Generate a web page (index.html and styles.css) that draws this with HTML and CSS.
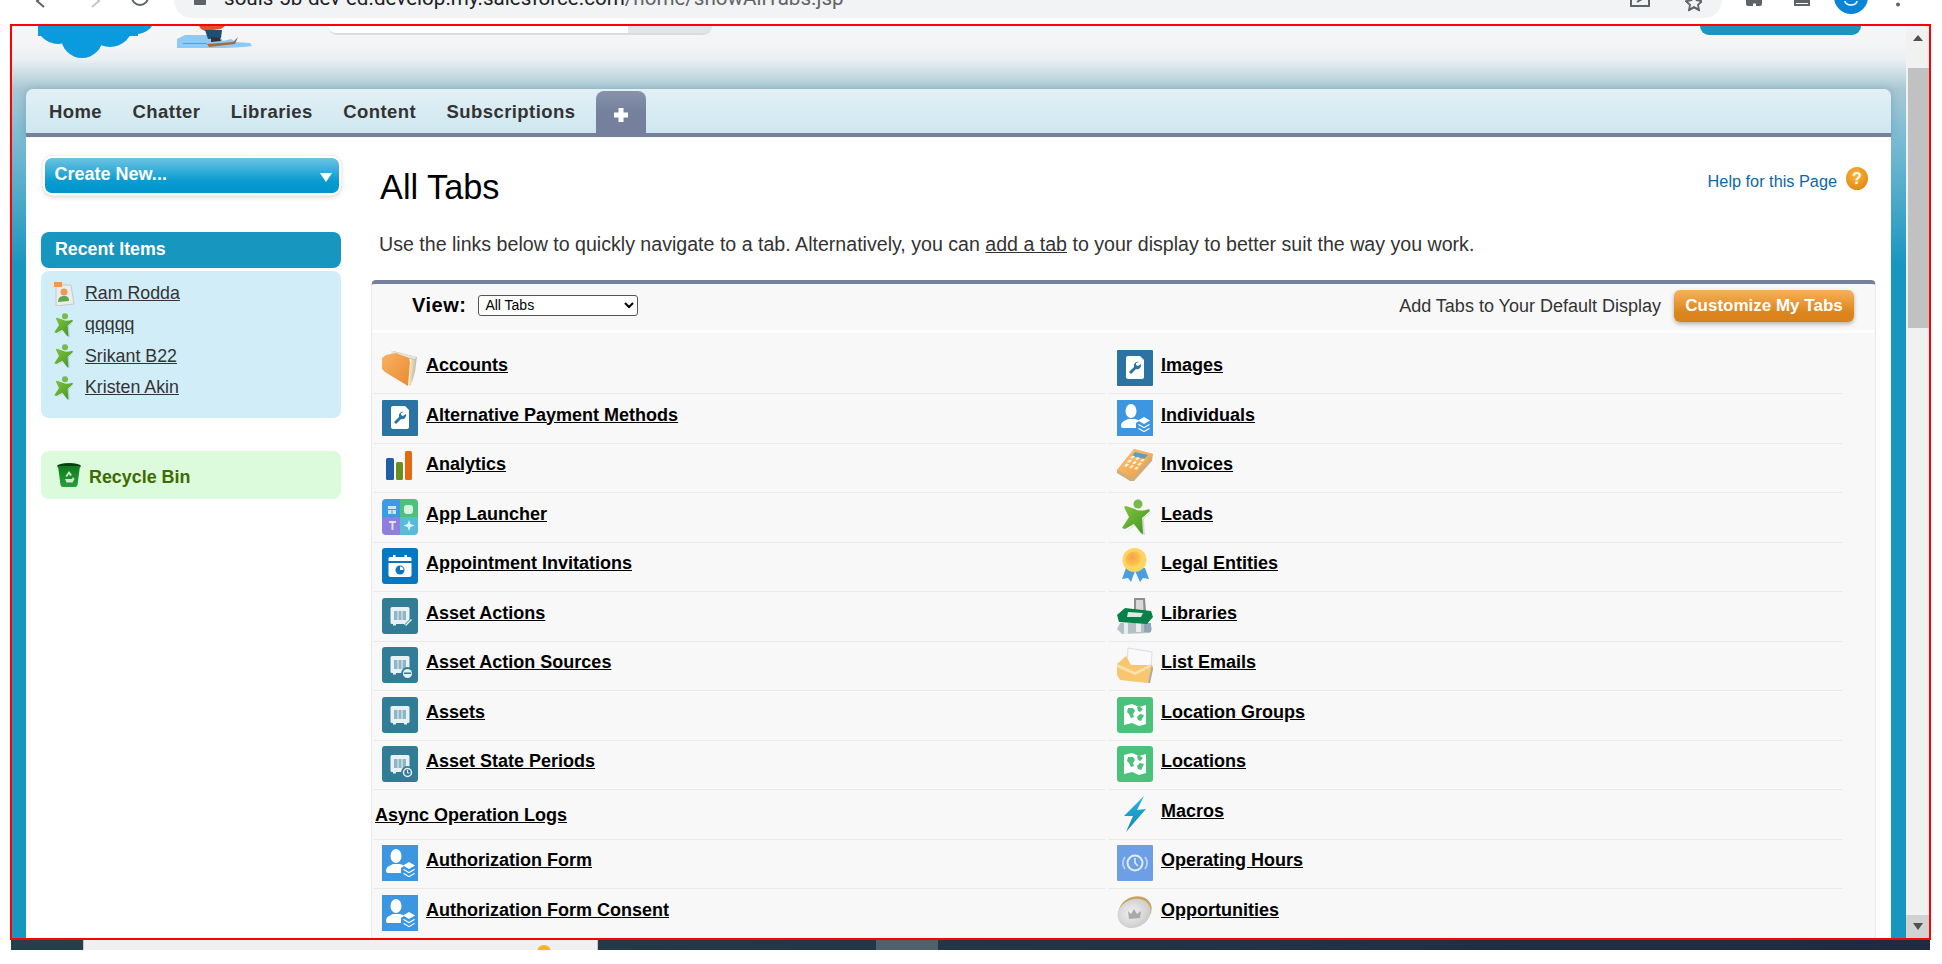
FILE: index.html
```html
<!DOCTYPE html>
<html lang="en">
<head>
<meta charset="utf-8">
<title>All Tabs</title>
<link rel="stylesheet" href="styles.css">
</head>
<body>
<svg class="defs" aria-hidden="true">
  <defs>
    <linearGradient id="gFolder" x1="0" y1="0" x2="1" y2="1"><stop offset="0" stop-color="#f9b262"/><stop offset="1" stop-color="#e98a33"/></linearGradient>
    <linearGradient id="gLead" x1="0" y1="0" x2="1" y2="1"><stop offset="0" stop-color="#83c63f"/><stop offset="1" stop-color="#3e9023"/></linearGradient>
    <linearGradient id="gCalc" x1="0" y1="0" x2="1" y2="1"><stop offset="0" stop-color="#fbc578"/><stop offset="1" stop-color="#ee9b3e"/></linearGradient>
    <linearGradient id="gBolt" x1="0" y1="0" x2="0" y2="1"><stop offset="0" stop-color="#25b6e6"/><stop offset="1" stop-color="#1189ab"/></linearGradient>
    <linearGradient id="gBin" x1="0" y1="0" x2="0" y2="1"><stop offset="0" stop-color="#0f7a1e"/><stop offset="1" stop-color="#27a13a"/></linearGradient>
    <radialGradient id="gMedal" cx=".4" cy=".35" r=".7"><stop offset="0" stop-color="#f9a04a"/><stop offset=".6" stop-color="#fbc14a"/><stop offset="1" stop-color="#fde07a"/></radialGradient>
    <radialGradient id="gCoin" cx=".45" cy=".45" r=".6"><stop offset="0" stop-color="#f2f2f2"/><stop offset="1" stop-color="#c9c9c9"/></radialGradient>
    <symbol id="i-folder" viewBox="0 0 36 36">
      <path d="M11 1 35 7 33 22 30 32 28 30 31 10 11 4Z" fill="#c9c4bb"/>
      <path d="M9 1 34 7 33 9 9 4Z" fill="#ece6da"/>
      <path d="M29 10 32 10 29 35 27 36Z" fill="#e8d9a8"/>
      <path d="M0 8 4 5 14 3 27 8 28 12 26 36 3 22 0 19Z" fill="url(#gFolder)"/>
    </symbol>
    <symbol id="i-wrench" viewBox="0 0 36 36">
      <rect width="36" height="36" rx="1" fill="#2a73a3"/>
      <path d="M9 8a2 2 0 0 1 2-2h12l4 4v17a2 2 0 0 1-2 2H11a2 2 0 0 1-2-2Z" fill="#fff"/>
      <path d="M22 12a4 4 0 0 0-5 5l-5 5 2 2 5-5a4 4 0 0 0 5-5l-3 2-2-1v-2Z" fill="#2a73a3"/>
    </symbol>
    <symbol id="i-bars" viewBox="0 0 36 36">
      <rect x="4" y="9" width="8" height="22" rx="1.5" fill="#1e5fa8"/>
      <rect x="14" y="13" width="7" height="18" rx="1.5" fill="#6a8e1f"/>
      <rect x="23" y="2" width="7" height="29" rx="1.5" fill="#e46a12"/>
    </symbol>
    <symbol id="i-launcher" viewBox="0 0 36 36">
      <path d="M18 0H4a4 4 0 0 0-4 4v14h18Z" fill="#3d9be6"/>
      <path d="M18 0h14a4 4 0 0 1 4 4v14H18Z" fill="#4bc27b"/>
      <path d="M18 36H4a4 4 0 0 1-4-4V18h18Z" fill="#8f7fdc"/>
      <path d="M18 36h14a4 4 0 0 0 4-4V18H18Z" fill="#56bcd8"/>
      <path d="M6 7h8v8H6Z" fill="#cfe6fa"/><path d="M6 10h8v1H6ZM9.500 11h1v4h-1Z" fill="#3d9be6"/>
      <rect x="22" y="6" width="9" height="9" rx="3" fill="#d8f3e3"/>
      <path d="M7 22h7v2h-2.500v7h-2v-7H7Z" fill="#e3defa"/>
      <path d="M27 21l1.500 4 4 1.500-4 1.500-1.500 4-1.500-4-4-1.500 4-1.500Z" fill="#dbf3f9"/>
    </symbol>
    <symbol id="i-appt" viewBox="0 0 36 36">
      <rect width="36" height="36" rx="3" fill="#0678bf"/>
      <path d="M8 9h20a1.500 1.500 0 0 1 1.500 1.500V13h-23v-2.500A1.500 1.500 0 0 1 8 9Z" fill="#fff"/>
      <rect x="11" y="7" width="2.500" height="4" fill="#fff"/><rect x="22.500" y="7" width="2.500" height="4" fill="#fff"/>
      <path d="M6.500 15h23v12a2 2 0 0 1-2 2h-19a2 2 0 0 1-2-2Z" fill="#fff"/>
      <circle cx="18" cy="22" r="4.500" fill="#0678bf"/><path d="M18 18.500v3.500h3.500a3.500 3.500 0 0 0-3.500-3.500Z" fill="#fff"/>
    </symbol>
    <symbol id="i-safe" viewBox="0 0 36 36">
      <rect width="36" height="36" rx="3" fill="#327c96"/>
      <path d="M10 9h16a1.500 1.500 0 0 1 1.500 1.500v14A1.500 1.500 0 0 1 26 26h-1v1.500h-3V26h-8v1.500h-3V26h-1a1.500 1.500 0 0 1-1.500-1.500v-14A1.500 1.500 0 0 1 10 9Z" fill="#e8f1f4"/>
      <rect x="12" y="13" width="12" height="9" fill="#8fb6c5"/><path d="M15.500 13h1v9h-1ZM19.500 13h1v9h-1Z" fill="#e8f1f4"/>
    </symbol>
    <symbol id="i-asset-action" viewBox="0 0 36 36">
      <use href="#i-safe"/>
      <path d="M21 28l9-9 2.500 2.500-9 9-3 .500Z" fill="#327c96"/><path d="M23 27l6-6 1 1-6 6Z" fill="#e8f1f4"/>
    </symbol>
    <symbol id="i-asset-source" viewBox="0 0 36 36">
      <use href="#i-safe"/>
      <circle cx="25.500" cy="26.500" r="6.500" fill="#327c96"/><circle cx="25.500" cy="26.500" r="4.500" fill="#e8f1f4"/><rect x="22" y="25.500" width="7" height="1.500" fill="#327c96"/>
    </symbol>
    <symbol id="i-asset-state" viewBox="0 0 36 36">
      <use href="#i-safe"/>
      <circle cx="25.500" cy="26.500" r="6.500" fill="#327c96"/><circle cx="25.500" cy="26.500" r="4" fill="none" stroke="#e8f1f4" stroke-width="1.500"/><path d="M25.500 24v3h2" fill="none" stroke="#e8f1f4"/>
    </symbol>
    <symbol id="i-auth" viewBox="0 0 36 36">
      <rect width="36" height="36" fill="#3d96e0"/>
      <ellipse cx="14" cy="11" rx="5.500" ry="7" fill="#fff"/>
      <path d="M4 26c0-4 3-5 7-7h7c2 .500 3 1 4 2l-3 2v5H6a2 2 0 0 1-2-2Z" fill="#fff"/>
      <path d="M27 17l6 3.500-6 3.500-6-3.500Z" fill="#fff"/>
      <path d="M22 24l5 3 5-3 1 .700-6 3.500-6-3.500Z" fill="#fff"/>
      <path d="M22 28l5 3 5-3 1 .700-6 3.500-6-3.500Z" fill="#fff"/>
    </symbol>
    <symbol id="i-calc" viewBox="0 0 36 36">
      <path d="M0 21 17 0 36 5 35 12 17 32 13 32 0 24Z" fill="#cfae7a"/>
      <path d="M0 21 17 0 36 5 16 29Z" fill="url(#gCalc)"/>
      <path d="M18 3 31 6 27 10 15 7Z" fill="#5b9fc6"/>
      <g fill="#fff2dc"><path d="M13 9l2.500-2.500 2.500 .8-2.500 2.500ZM18 10.500l2.500-2.500 2.500 .8-2.500 2.500ZM23 12l2.500-2.500 2.500 .8-2.500 2.500ZM10 13l2.500-2.500 2.500 .8-2.500 2.500ZM15 14.500l2.500-2.500 2.500 .8-2.500 2.500ZM20 16l2.500-2.500 2.500 .8-2.500 2.500ZM7 17l2.500-2.500 2.500 .8-2.500 2.500ZM12 18.500l2.500-2.500 2.500 .8-2.500 2.500ZM17 20l2.500-2.500 2.500 .8-2.500 2.500Z"/></g>
    </symbol>
    <symbol id="i-lead" viewBox="0 0 36 36">
      <path d="M8 33 18 27 25 36 28 36 27 20 34 13Z" fill="#000" opacity=".12"/>
      <circle cx="21" cy="5" r="4.500" fill="#79b84a"/>
      <path d="M18 10c3 2 8 2 14 0l1 2-8 7 1 16-2-1-7-9-9 5-3-1 7-11L7 8l2-1Z" fill="url(#gLead)"/>
    </symbol>
    <symbol id="i-ribbon" viewBox="0 0 36 36">
      <path d="M9 20 5 31l6-1 3 4 4-11 5 11 3-4 6 1-4-11Z" fill="#4b9fe0"/>
      <circle cx="17.500" cy="12" r="12" fill="#fbd560"/>
      <circle cx="17" cy="12" r="8.500" fill="url(#gMedal)"/>
    </symbol>
    <symbol id="i-library" viewBox="0 0 36 36">
      <path d="M17 0h11l1 13H17Z" fill="#8d8f92"/><path d="M19 2h7l.500 10H19Z" fill="#d8d8d8"/>
      <path d="M3 25h30l2 6-2 4-28 1-5-5Z" fill="#b4bfc6"/><path d="M7 25h4v11H7ZM19 25h5v9h-5Z" fill="#e8ecee"/><path d="M27 25h7v9h-7Z" fill="#8fa6b4"/>
      <path d="M8 10 34 13 36 19 30 26 2 24 0 17Z" fill="#07804a"/>
      <path d="M11 14l15 1-2 4H10Z" fill="#d6efe0"/>
    </symbol>
    <symbol id="i-mail" viewBox="0 0 36 36">
      <path d="M11 1 35 5 34 21 10 22Z" fill="#fafafc" stroke="#dcdde6" stroke-width="1"/>
      <path d="M0 17 9 9 14 18 35 18 36 22 31 36 3 33 0 28Z" fill="#f8c66f"/>
      <path d="M0 17 18 25 34 17 34 20 18 28 0 20Z" fill="#fbe1ad"/>
      <path d="M31 36 35 18 36 22 33 36Z" fill="#a8a8a8"/>
    </symbol>
    <symbol id="i-map" viewBox="0 0 36 36">
      <rect width="36" height="36" rx="3" fill="#4bc27b"/>
      <path d="M7 9 15 7 22 10 29 8V27L22 29 15 26 7 28Z" fill="#fff"/>
      <path d="M11 11h5l2 3-2 3 1 3-3 1-2-4-2-2ZM20 20l3-3 4 1-3 6-3-1ZM20 10l3 0 3 2-3 3-2-1Z" fill="#4bc27b"/>
    </symbol>
    <symbol id="i-bolt" viewBox="0 0 36 36">
      <path d="M27 0 7 20l9 0L9 36l20-23-9 1Z" fill="url(#gBolt)"/>
    </symbol>
    <symbol id="i-hours" viewBox="0 0 36 36">
      <rect width="36" height="36" rx="1" fill="#6c9fe6"/>
      <circle cx="18" cy="18" r="7.500" fill="none" stroke="#e2ecfb" stroke-width="2"/>
      <path d="M18 13v5l3 3" fill="none" stroke="#e2ecfb" stroke-width="1.600"/>
      <path d="M8 12a10 10 0 0 0 0 12M28 12a10 10 0 0 1 0 12" fill="none" stroke="#bcd3f6" stroke-width="2"/>
    </symbol>
    <symbol id="i-coin" viewBox="0 0 36 36">
      <ellipse cx="19" cy="16" rx="17" ry="14" transform="rotate(-25 18 18)" fill="#c8a35a"/>
      <ellipse cx="17" cy="18" rx="17" ry="14" transform="rotate(-25 18 18)" fill="url(#gCoin)"/>
      <path d="M11 16l3 3 3-5 3 5 4-3-1 7-11 1Z" fill="#a9a9a9"/>
    </symbol>
    <symbol id="i-contact" viewBox="0 0 24 24">
      <path d="M5 3h15l3 19-18 2Z" fill="#ececec" stroke="#c8c8c8"/>
      <rect x="3" y="0" width="8" height="5" fill="#ef9a4a"/>
      <circle cx="13" cy="10" r="3.500" fill="#e99a55"/>
      <path d="M7 20c0-4 2-6 6-6s5 2 5 5Z" fill="#5ea84a"/>
    </symbol>
    <symbol id="i-bin" viewBox="0 0 24 25">
      <ellipse cx="12" cy="3" rx="12" ry="3" fill="#063f10"/>
      <path d="M1 3h22l-2.500 19a2.500 2.500 0 0 1-2.500 2H6a2.500 2.500 0 0 1-2.500-2Z" fill="url(#gBin)"/>
      <path d="M12 8l3 4-2 1-1-2-2 3-1.500-1ZM8 16h7l1-2 1.500 2-2 3.500H9.500Z" fill="#cfe8d0"/>
    </symbol>
  </defs>
</svg>

<div class="chrome">
  <svg class="nav-icons" viewBox="0 0 174 24" width="174" height="24">
    <path d="M45 -6 37 1 44 7" fill="none" stroke="#5f6368" stroke-width="2"/>
    <path d="M92 -6 99 1 92 7" fill="none" stroke="#c4c6c9" stroke-width="2"/>
    <circle cx="140" cy="-3" r="8" fill="none" stroke="#5f6368" stroke-width="2"/>
  </svg>
  <div class="address">
    <svg class="lock" viewBox="0 0 12 12" width="12" height="12"><rect width="12" height="12" rx="1" fill="#5f6368"/></svg>
    <span class="url">souls-5b-dev-ed.develop.my.salesforce.com<span class="url-path">/home/showAllTabs.jsp</span></span>
    <svg class="addr-icons" viewBox="0 0 80 24" width="80" height="24">
      <path d="M9 -2v8h18v-8" fill="none" stroke="#5f6368" stroke-width="2"/>
      <path d="M15 2 25 -4" fill="none" stroke="#5f6368" stroke-width="2"/>
      <path d="M72 -6l3 6 6 1-4.500 4 1 6-5.500-3-5.500 3 1-6-4.500-4 6-1Z" fill="#5f6368" stroke="#5f6368" stroke-width="1"/>
      <path d="M72 -3l2 4 4 .7-3 2.800.7 3.500-3.700-2-3.700 2 .7-3.500-3-2.800 4-.7Z" fill="#f1f3f4"/>
    </svg>
  </div>
  <svg class="win-icons" viewBox="0 0 220 24" width="220" height="24">
    <path d="M24 0h16v4a2 2 0 0 1-2 2h-4v-2a2 2 0 0 0-3 0v2h-5a2 2 0 0 1-2-2Z" fill="#5f6368"/>
    <path d="M73 -4h14v9H73Z" fill="none" stroke="#5f6368" stroke-width="2"/><rect x="73" y="-2" width="14" height="5" fill="#5f6368"/>
    <circle cx="129" cy="-3" r="17" fill="#0a84d6"/>
    <path d="M123 1a6 4 0 0 0 12 0" fill="none" stroke="#fff" stroke-width="1.600"/>
    <circle cx="176" cy="4.500" r="2" fill="#5f6368"/>
  </svg>
</div>

<div class="frame">
  <div class="page">
    <header class="masthead">
      <svg class="cloud" viewBox="0 0 118 32" width="118" height="32">
        <g fill="#0a9ade">
          <circle cx="20" cy="-4" r="22"/><circle cx="44" cy="11" r="21"/><circle cx="72" cy="-2" r="23"/><circle cx="98" cy="-12" r="20"/>
          <rect x="0" y="0" width="100" height="10"/>
        </g>
      </svg>
      <svg class="skier" viewBox="0 0 79 24" width="79" height="24">
        <path d="M2 13 10 9l22 0 2 3h12l2 3 8-2 5 3 14 1 2 3-8 1-18 1H2Z" fill="#8ccbf7"/>
        <path d="M8 17h24v1H8Z" fill="#4e9fdc"/>
        <path d="M24 0h26l-4 3-16 2-4-2Z" fill="#e2512d"/>
        <path d="M30 4h17l-1 8-13 1Z" fill="#1f4f74"/>
        <path d="M36 11l9 1 1 3-10 1Z" fill="#333"/>
        <path d="M32 18 58 16l5-5-3 7-26 3Z" fill="#a96c37"/>
      </svg>
      <div class="search"><div class="search-input"></div><div class="search-btn"></div></div>
      <div class="setup-btn"></div>
    </header>

    <nav class="tabs">
      <a class="tab">Home</a>
      <a class="tab">Chatter</a>
      <a class="tab">Libraries</a>
      <a class="tab">Content</a>
      <a class="tab">Subscriptions</a>
      <a class="tab-plus"><svg viewBox="0 0 16 16" width="16" height="16"><path d="M5.500 1h5v4.500H15v5h-4.500V15h-5v-4.500H1v-5h4.500Z" fill="#fff"/></svg></a>
    </nav>

    <div class="content">
      <aside class="sidebar">
        <div class="create-wrap">
          <div class="create">
            <span>Create New...</span>
            <span class="caret"></span>
          </div>
        </div>
        <div class="side-head">Recent Items</div>
        <div class="side-body">
          <a class="recent"><svg class="r-ic"><use href="#i-contact"/></svg><span>Ram Rodda</span></a>
          <a class="recent"><svg class="r-ic"><use href="#i-lead"/></svg><span>qqqqq</span></a>
          <a class="recent"><svg class="r-ic"><use href="#i-lead"/></svg><span>Srikant B22</span></a>
          <a class="recent"><svg class="r-ic"><use href="#i-lead"/></svg><span>Kristen Akin</span></a>
        </div>
        <div class="recycle"><svg class="bin"><use href="#i-bin"/></svg><span>Recycle Bin</span></div>
      </aside>

      <main class="main">
        <div class="title-row">
          <h1 class="title">All Tabs</h1>
          <a class="help"><span>Help for this Page</span><span class="help-ic">?</span></a>
        </div>
        <p class="intro">Use the links below to quickly navigate to a tab. Alternatively, you can <a class="inline">add a tab</a> to your display to better suit the way you work.</p>

        <section class="panel">
          <div class="panel-head">
            <label class="view"><b>View:</b>
              <select class="view-select"><option>All Tabs</option></select>
            </label>
            <span class="add-text">Add Tabs to Your Default Display</span>
            <button class="customize">Customize My Tabs</button>
          </div>
          <div class="list">
            <div class="row"><svg class="ic"><use href="#i-folder"/></svg><a>Accounts</a></div>
            <div class="row"><svg class="ic"><use href="#i-wrench"/></svg><a>Images</a></div>
            <div class="row"><svg class="ic"><use href="#i-wrench"/></svg><a>Alternative Payment Methods</a></div>
            <div class="row"><svg class="ic"><use href="#i-auth"/></svg><a>Individuals</a></div>
            <div class="row"><svg class="ic"><use href="#i-bars"/></svg><a>Analytics</a></div>
            <div class="row"><svg class="ic"><use href="#i-calc"/></svg><a>Invoices</a></div>
            <div class="row"><svg class="ic"><use href="#i-launcher"/></svg><a>App Launcher</a></div>
            <div class="row"><svg class="ic"><use href="#i-lead"/></svg><a>Leads</a></div>
            <div class="row"><svg class="ic"><use href="#i-appt"/></svg><a>Appointment Invitations</a></div>
            <div class="row"><svg class="ic"><use href="#i-ribbon"/></svg><a>Legal Entities</a></div>
            <div class="row"><svg class="ic"><use href="#i-asset-action"/></svg><a>Asset Actions</a></div>
            <div class="row"><svg class="ic"><use href="#i-library"/></svg><a>Libraries</a></div>
            <div class="row"><svg class="ic"><use href="#i-asset-source"/></svg><a>Asset Action Sources</a></div>
            <div class="row"><svg class="ic"><use href="#i-mail"/></svg><a>List Emails</a></div>
            <div class="row"><svg class="ic"><use href="#i-safe"/></svg><a>Assets</a></div>
            <div class="row"><svg class="ic"><use href="#i-map"/></svg><a>Location Groups</a></div>
            <div class="row"><svg class="ic"><use href="#i-asset-state"/></svg><a>Asset State Periods</a></div>
            <div class="row"><svg class="ic"><use href="#i-map"/></svg><a>Locations</a></div>
            <div class="row row-plain"><a>Async Operation Logs</a></div>
            <div class="row"><svg class="ic"><use href="#i-bolt"/></svg><a>Macros</a></div>
            <div class="row"><svg class="ic"><use href="#i-auth"/></svg><a>Authorization Form</a></div>
            <div class="row"><svg class="ic"><use href="#i-hours"/></svg><a>Operating Hours</a></div>
            <div class="row"><svg class="ic"><use href="#i-auth"/></svg><a>Authorization Form Consent</a></div>
            <div class="row"><svg class="ic"><use href="#i-coin"/></svg><a>Opportunities</a></div>
          </div>
        </section>
      </main>
    </div>
  </div>
  <div class="scrollbar">
    <div class="sb-up"></div>
    <div class="sb-thumb"></div>
    <div class="sb-down"><span></span></div>
  </div>
</div>

<div class="taskbar">
  <div class="tb-window"><span class="tb-sun"></span></div>
  <div class="tb-active"></div>
  <div class="tb-clock">12:15</div>
</div>
</body>
</html>
```

FILE: styles.css
```css
* { box-sizing: border-box; }
html, body { margin: 0; padding: 0; }
body {
  width: 1942px;
  height: 964px;
  overflow: hidden;
  background: #fff;
  font-family: "Liberation Sans", Arial, sans-serif;
  color: #333;
}
a { cursor: pointer; }
.defs { display: block; width: 0; height: 0; }

/* browser chrome, cut off by the top of the screenshot */
.chrome {
  display: flex;
  align-items: flex-start;
  height: 24px;
  overflow: hidden;
}
.nav-icons, .win-icons { display: block; flex: none; overflow: hidden; }
.address {
  flex: none;
  display: flex;
  align-items: flex-end;
  width: 1548px;
  height: 18px;
  padding-left: 20px;
  background: #f1f3f4;
  border-radius: 0 0 24px 24px;
  overflow: hidden;
}
.lock { margin: 0 18px 13px 0; flex: none; }
.url {
  font-family: Roboto, "Liberation Sans", sans-serif;
  font-size: 20.600px;
  line-height: 24px;
  color: #202124;
  white-space: nowrap;
  margin-bottom: 8px;
  flex: 1;
}
.url-path { color: #5f6368; }
.addr-icons { flex: none; align-self: flex-start; margin-right: 20px; }

/* red selection frame */
.frame {
  display: flex;
  width: 1921px;
  height: 916px;
  margin-left: 10px;
  border: 2px solid #f00;
  overflow: hidden;
}
.page {
  flex: 1;
  min-width: 0;
  height: 912px;
  overflow: hidden;
  background: linear-gradient(180deg, #f5f5f6 0, #f5f5f6 15px, #e9eff2 34px, #a9c8d4 63px, #7dbcd3 110px, #1796bf 240px, #1796bf 100%);
}
.masthead {
  display: flex;
  align-items: flex-start;
  height: 63px;
  padding-left: 26px;
}
.cloud { flex: none; display: block; }
.skier { flex: none; display: block; margin-left: 19px; }
.search {
  display: flex;
  width: 384px;
  height: 9px;
  margin-left: 74px;
  border-radius: 0 0 14px 14px;
  overflow: hidden;
  border-bottom: 2px solid #dcdcdc;
}
.search-input { flex: 1; background: #fff; }
.search-btn { width: 84px; background: #e4e4e4; }
.setup-btn {
  width: 161px;
  height: 9px;
  margin-left: 988px;
  background: #1796bf;
  border-radius: 0 0 14px 14px;
}

/* tab bar */
.tabs {
  display: flex;
  align-items: flex-end;
  gap: 30.500px;
  height: 48px;
  margin: 0 15px 0 14px;
  padding-left: 23px;
  background: linear-gradient(180deg, #e3f0f6, #cde7ef);
  border-bottom: 4px solid #75809c;
  border-radius: 7px 7px 0 0;
  box-shadow: 0 0 8px rgba(40, 90, 110, .25);
}
.tab {
  font-size: 18.500px;
  font-weight: 700;
  letter-spacing: .42px;
  line-height: 22px;
  color: #333;
  padding-bottom: 10px;
}
.tab-plus {
  display: flex;
  align-items: center;
  justify-content: center;
  width: 50px;
  height: 42px;
  margin-left: -10px;
  padding-top: 6px;
  background: linear-gradient(180deg, #8792ab, #75809c 50%);
  border-radius: 8px 8px 0 0;
}

/* white body */
.content {
  display: flex;
  height: 801px;
  margin: 0 15px 0 14px;
  background: #fff;
}
.sidebar { flex: none; width: 300px; margin-left: 15px; padding-top: 21px; }
.create-wrap {
  height: 35px;
  margin: 0 2.500px 39px 3.500px;
  border-radius: 8px;
  box-shadow: 0 0 0 2.500px #fff, 0 0 0 3px #e4e4e4, 0 2px 5px 2px rgba(0, 0, 0, .18);
}
.create {
  display: flex;
  align-items: center;
  justify-content: space-between;
  height: 35px;
  padding: 0 7px 2px 10px;
  background: linear-gradient(180deg, #6cc4e2, #0a9cd0 65%, #0095cc);
  border-radius: 7px;
  font-size: 18px;
  font-weight: 700;
  color: #fff;
}
.caret {
  width: 0;
  height: 0;
  border-left: 6px solid transparent;
  border-right: 6px solid transparent;
  border-top: 9px solid #fff;
  margin-top: 5px;
}
.side-head {
  height: 36px;
  padding-left: 14px;
  line-height: 34px;
  font-size: 17.800px;
  font-weight: 700;
  color: #fff;
  background: #1796bf;
  border-radius: 8px;
}
.side-body {
  height: 147px;
  margin-top: 3px;
  padding: 7px 0 0 10px;
  background: #d0edf8;
  border-radius: 8px;
}
.recent {
  display: flex;
  align-items: center;
  gap: 10px;
  height: 31.300px;
  font-size: 17.800px;
  color: #333;
}
.recent span { text-decoration: underline; }
.r-ic { width: 24px; height: 24px; flex: none; }
.recycle {
  display: flex;
  align-items: center;
  gap: 8px;
  height: 48px;
  margin-top: 33px;
  padding: 0 0 0 16px;
  background: #dcfadc;
  border-radius: 8px;
  font-size: 17.900px;
  font-weight: 700;
  color: #3d6b00;
}
.recycle span { margin-top: 5px; }
.bin { width: 24px; height: 25px; flex: none; }

/* main column */
.main { flex: 1; min-width: 0; margin: 0 15px 0 30px; padding-top: 30px; }
.title-row { display: flex; justify-content: space-between; height: 40px; padding: 0 8px 0 9px; }
.title {
  margin: 0;
  font-size: 34.300px;
  font-weight: 400;
  line-height: 40px;
  color: #000;
}
.help { display: flex; align-items: flex-start; gap: 9px; font-size: 16.300px; color: #0b68a8; }
.help span:first-child { line-height: 29px; }
.help-ic {
  display: block;
  width: 22px;
  height: 23px;
  border-radius: 50%;
  background: radial-gradient(circle at 45% 35%, #fbb53d, #de8510 85%);
  color: #fff;
  font-size: 16px;
  font-weight: 700;
  line-height: 23px;
  text-align: center;
}
.intro {
  margin: 25px 0 24px 8px;
  font-size: 19.600px;
  line-height: 24px;
  color: #333;
}
.inline { text-decoration: underline; }

.panel {
  background: #f8f8f8;
  border: 1px solid #e9e9e9;
  border-top: 4px solid #75809c;
  border-bottom: 0;
  border-radius: 5px 5px 0 0;
}
.panel-head {
  display: flex;
  align-items: center;
  height: 49px;
  padding: 0 21px 3px 40px;
  border-bottom: 3px solid #fff;
}
.view { display: flex; align-items: center; gap: 12px; font-size: 20px; letter-spacing: .5px; color: #000; margin-bottom: 1px; flex: 1; }
.view-select {
  width: 160px;
  height: 21px;
  padding: 0 0 0 2px;
  font-family: "Liberation Sans", Arial, sans-serif;
  font-size: 14px;
  letter-spacing: 0;
  color: #000;
  background: #fff;
  border: 1px solid #555;
  border-radius: 3px;
}
.add-text { font-size: 18px; color: #333; margin: 2px 13px 0 0; }
.customize {
  width: 180px;
  height: 32px;
  padding: 0;
  border: 0;
  border-radius: 6px;
  background: linear-gradient(180deg, #f6b25a, #dc851d 70%, #d9811a);
  box-shadow: 0 2px 4px rgba(0, 0, 0, .3);
  font-family: "Liberation Sans", Arial, sans-serif;
  font-size: 17px;
  font-weight: 700;
  color: #fff;
}
.list {
  display: grid;
  grid-template-columns: 731px 733px;
  column-gap: 4px;
  grid-auto-rows: 49.500px;
  padding: 11.500px 0 0 2px;
}
.row {
  display: flex;
  align-items: flex-start;
  gap: 8px;
  padding: 5.500px 0 0 8px;
  border-bottom: 1px solid #e9e9e9;
}
.row a {
  margin-top: 4px;
  font-size: 18px;
  font-weight: 700;
  line-height: 22px;
  color: #000;
  text-decoration: underline;
}
.row-plain { padding-left: 1px; }
.row-plain a { margin-top: 8px; }
.ic { width: 36px; height: 36px; flex: none; display: block; }

/* scrollbar */
.scrollbar {
  display: flex;
  flex-direction: column;
  align-items: flex-end;
  flex: none;
  width: 23px;
  height: 912px;
  background: #f1f1f1;
}
.sb-up {
  width: 0;
  height: 0;
  margin: 9px 6px 27px 0;
  border-left: 5.500px solid transparent;
  border-right: 5.500px solid transparent;
  border-bottom: 6px solid #505050;
}
.sb-thumb { width: 21px; height: 260px; background: #c1c1c1; }
.sb-down {
  display: flex;
  align-items: center;
  justify-content: center;
  width: 23px;
  height: 23px;
  margin-top: auto;
  background: #d2d2d2;
}
.sb-down span {
  width: 0;
  height: 0;
  border-left: 5.500px solid transparent;
  border-right: 5.500px solid transparent;
  border-top: 7px solid #505050;
}

/* desktop taskbar */
.taskbar {
  display: flex;
  width: 1919px;
  height: 10px;
  margin-left: 11px;
  overflow: hidden;
  background: linear-gradient(90deg, #25404b, #1e2b42);
}
.tb-window {
  width: 515px;
  margin-left: 72px;
  background: #f0f0f0;
  border-right: 1px solid #c8c8c8;
  border-left: 1px solid #c8c8c8;
  padding: 5px 0 0 453px;
}
.tb-sun { display: block; width: 14px; height: 14px; border-radius: 50%; background: #f5b32c; }
.tb-active { width: 62px; margin-left: 278px; background: #4f626b; }
.tb-clock {
  margin-left: 843px;
  padding-top: 7px;
  font-size: 14px;
  line-height: 16px;
  color: #fff;
  white-space: nowrap;
}
```
